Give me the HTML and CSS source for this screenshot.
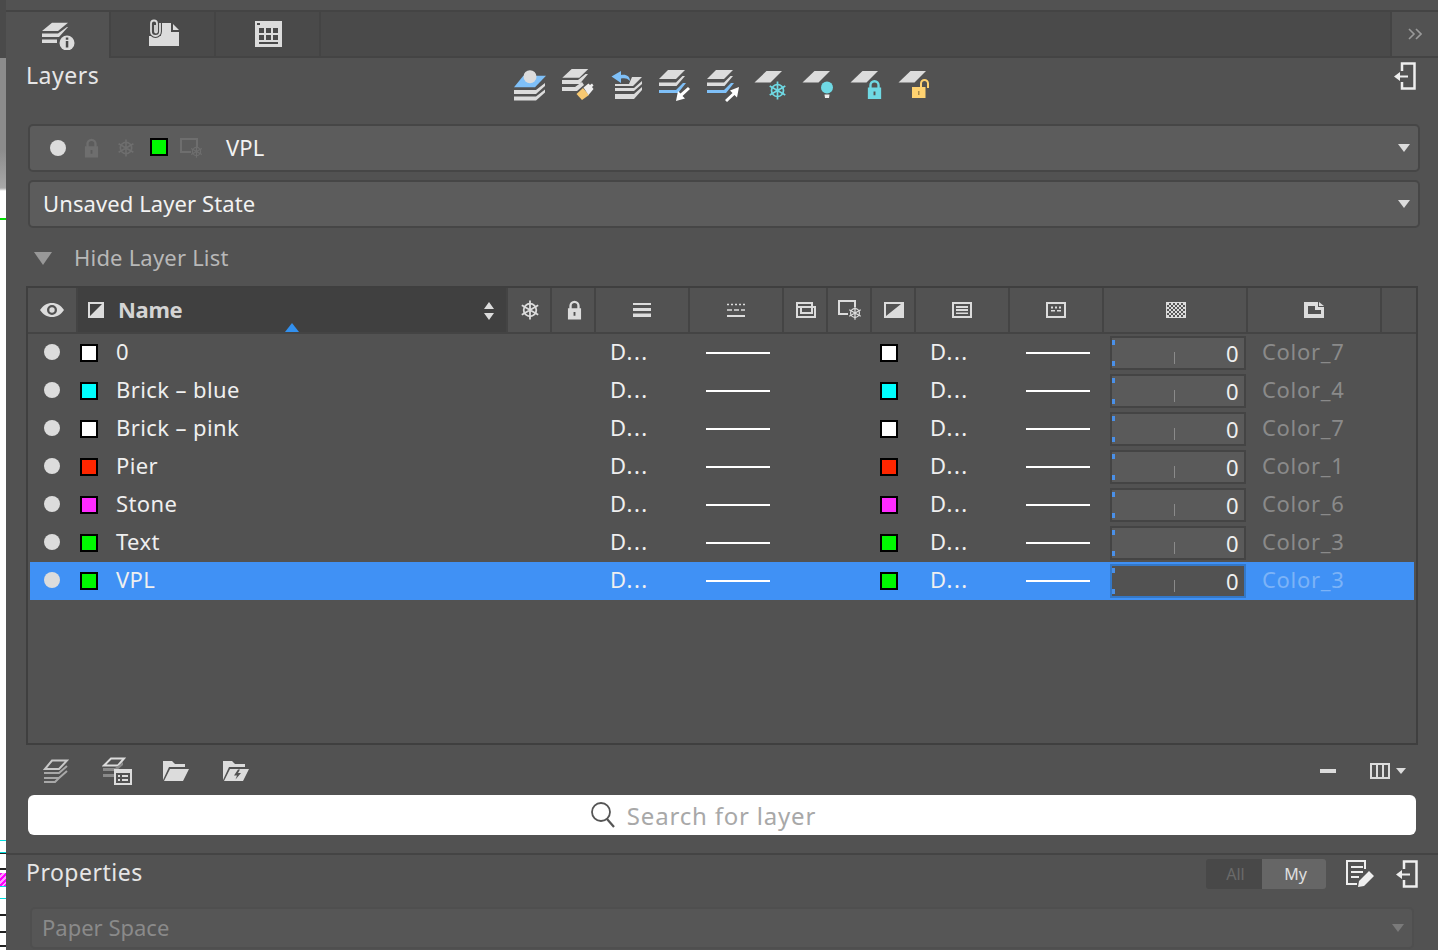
FILE: index.html
```html
<!DOCTYPE html>
<html lang="en">
<head>
    <title>Layers</title>
    <link rel="stylesheet" href="styles.css">
</head>
<body>
<svg class="sprites" width="0" height="0">
    <symbol id="dot" viewBox="0 0 16 16"><circle cx="8" cy="8" r="8" fill="#dcdcdc"/></symbol>
    <symbol id="flake" viewBox="0 0 20 20">
        <g fill="none" stroke="currentColor" stroke-width="1.800">
            <circle cx="10" cy="10" r="6.300"/>
            <path d="M10 .5v19M1.800 5.300l16.400 9.400M1.800 14.700l16.400-9.400"/>
        </g>
    </symbol>
    <symbol id="lock" viewBox="0 0 16 20">
        <path fill="currentColor" fill-rule="evenodd" d="M1 8h1.500V5.500a5.500 5.500 0 0 1 11 0V8H15v12H1zM5 8h6V5.500a3 3 0 0 0-6 0zM7 12v4h2v-4z"/>
    </symbol>
    <symbol id="exit" viewBox="0 0 22 28">
        <path fill="none" stroke="#eee" stroke-width="2.500" d="M8 9V1.500h12.500v25H8V20"/>
        <path fill="#eee" d="M0 14.500 6 10v3.500h8v2H6V19z"/>
    </symbol>
    <symbol id="slab" viewBox="0 0 36 36"><path fill="#dcdcdc" d="M14.500 4h15.500l-11.500 11.500H2.500z"/></symbol>
    <symbol id="stack" viewBox="0 0 36 36">
        <path fill="#dcdcdc" d="M12 3h17l-9 9H3z"/>
        <path fill="#dcdcdc" d="M3 15.500h17l6.500-6.500 2.500 0-8.500 10H3z"/>
    </symbol>
</svg>

<div class="canvas-strip"></div>

<div class="panel">
    <div class="tabs">
        <div class="tab active">
            <svg class="tab-one" width="33" height="28" viewBox="0 0 33 28">
                <path fill="#dcdcdc" d="M10 .7h16L16 9H0zM0 11.500h16l9-6.500h1L17 15H0zM0 17.500h15v3.500H0z"/>
                <circle cx="25" cy="21" r="7.500" fill="#dcdcdc"/>
                <path fill="#4a4a4a" d="M23.800 19h2.500v6.500h-2.500zM23.800 15.500h2.500v2.200h-2.500z"/>
            </svg>
        </div>
        <div class="tab">
            <svg class="tab-two" width="30" height="27" viewBox="0 0 30 27">
                <path fill="#dcdcdc" d="M12 4h10v9h8v14H0V17h12z"/>
                <path fill="#dcdcdc" d="M24 5l6 6h-6z"/>
                <path fill="none" stroke="#4a4a4a" stroke-width="4" d="M11 4v8.500a4.500 4.500 0 0 1-9 0V4.500a3 3 0 0 1 6 0v8a1 1 0 0 1-2 0V6"/>
                <path fill="none" stroke="#dcdcdc" stroke-width="1.800" d="M11 4v8.500a4.500 4.500 0 0 1-9 0V4.500a3 3 0 0 1 6 0v8a1 1 0 0 1-2 0V6"/>
            </svg>
        </div>
        <div class="tab">
            <svg width="27" height="26" viewBox="0 0 27 26">
                <path fill="#dcdcdc" fill-rule="evenodd" d="M0 0h27v26H0zM2 2v2h3V2zM4 7v5h5V7zM11 7v5h5V7zM18 7v5h5V7zM4 14v5h5v-5zM11 14v5h5v-5zM18 14v5h5v-5zM4 21v2h19v-2z"/>
            </svg>
        </div>
        <div class="tab-fill"></div>
        <div class="tab-more">
            <svg width="14" height="12" viewBox="0 0 14 12"><path fill="none" stroke="#9a9a9a" stroke-width="1.600" d="M1 1l5 5-5 5M8 1l5 5-5 5"/></svg>
        </div>
    </div>

    <div class="section-head">
        <h2 class="section-title">Layers</h2>
        <div class="tool-row">
            <svg class="tool" viewBox="0 0 36 36">
                <path fill="#7fc0f8" d="M11.300 8.700H34L23 20.300H2z"/>
                <circle cx="18" cy="9.700" r="6.500" fill="#dcdcdc"/>
                <path fill="#dcdcdc" d="M2 23h22l9-7v3l-9 8H2zM2 29.500h22l9-7v3l-9 8H2z"/>
            </svg>
            <svg class="tool" viewBox="0 0 36 36">
                <path fill="#dcdcdc" d="M11.700 2h16.600l-9 8.700h-17zM2 13h16l7.500-6 2.500 0-8.500 10H2zM2 20h13l7-5 2 3-7 6H2z"/>
                <path fill="#f8c971" d="M16.500 27l6.500-6 6 7-7 5z"/>
                <path fill="#eee" d="M23.500 20.500l5-4 1.500 1.500 2-1.500 1.500 2-1.500 1.500 1.500 2-5 6z"/>
            </svg>
            <svg class="tool" viewBox="0 0 36 36">
                <path fill="#dcdcdc" d="M24 10h10l-9 9H7v-2h14zM7 21h19l8-7v3l-8 7H7zM7 27h19l8-7v3l-8 9H7z"/>
                <path fill="#7fc0f8" d="M3.500 9.500 13 4v4c5-1 9 1 9 6-3-3-5-3-9-2.500V16z"/>
            </svg>
            <svg class="tool" viewBox="0 0 36 36">
                <use href="#stack"/>
                <path fill="#7fc0f8" d="M3 23h17l7-7h3l-8 10H3z"/>
                <path fill="#fff" d="M20 34l2-10 2.500 2.500L32 20l2 2-7.500 7 2.500 2.500z"/>
            </svg>
            <svg class="tool" viewBox="0 0 36 36">
                <use href="#stack"/>
                <path fill="#7fc0f8" d="M3 23h17l7-7h3l-8 10H3z"/>
                <path fill="#fff" d="M35 20l-2 10.500-2.500-2.500-7.500 7-2-2 7.500-7-2.500-2.500z"/>
            </svg>
            <svg class="tool" viewBox="0 0 36 36">
                <use href="#slab"/>
                <use href="#flake" x="16" y="14" width="19" height="19" class="ice"/>
            </svg>
            <svg class="tool" viewBox="0 0 36 36">
                <use href="#slab"/>
                <circle cx="27" cy="20.500" r="6" fill="#6fd9e4"/>
                <path fill="#eee" d="M24.500 27.500h5L29 31h-4z"/>
            </svg>
            <svg class="tool" viewBox="0 0 36 36">
                <use href="#slab"/>
                <use href="#lock" x="18.500" y="13" width="16" height="19" class="ice"/>
            </svg>
            <svg class="tool" viewBox="0 0 36 36">
                <use href="#slab"/>
                <path fill="#ffd270" d="M16 20h13.500v11H16z"/>
                <path fill="#a98a4a" d="M22 24h1.500v4H22z"/>
                <path fill="none" stroke="#ffd270" stroke-width="2" d="M25 20v-3.500a3.500 3.500 0 0 1 7 0V21"/>
            </svg>
        </div>
        <svg class="exit-icon"><use href="#exit"/></svg>
    </div>

    <div class="dropdown first">
        <svg class="state-dot"><use href="#dot"/></svg>
        <svg class="state-lock"><use href="#lock"/></svg>
        <svg class="state-flake"><use href="#flake"/></svg>
        <span class="swatch green"></span>
        <svg class="state-vp" viewBox="0 0 24 20">
            <path fill="none" stroke="#6e6e6e" stroke-width="2" d="M11 14H1V1h16v8"/>
            <use href="#flake" x="10" y="7" width="13" height="13"/>
        </svg>
        <span class="dropdown-label vpl">VPL</span>
        <span class="caret"></span>
    </div>
    <div class="dropdown">
        <span class="dropdown-label">Unsaved Layer State</span>
        <span class="caret"></span>
    </div>

    <div class="list-toggle">
        <span class="toggle-arrow"></span>
        <span class="toggle-label">Hide Layer List</span>
    </div>

    <div class="table">
        <div class="table-head">
            <div class="col"><svg width="24" height="14" viewBox="0 0 24 14"><path fill="#dcdcdc" fill-rule="evenodd" d="M0 7c3-4.500 7-7 12-7s9 2.500 12 7c-3 4.500-7 7-12 7S3 11.500 0 7zM12 2a5 5 0 1 0 0 10 5 5 0 0 0 0-10z"/><circle cx="12" cy="7" r="2.700" fill="#dcdcdc"/></svg></div>
            <div class="col col-name">
                <svg width="16" height="16" viewBox="0 0 16 16"><path fill="#dcdcdc" fill-rule="evenodd" d="M0 0h16v16H0zM2 2v12L14 2z"/></svg>
                <span class="name-label">Name</span>
                <span class="sort-mark"></span>
                <svg class="sort-arrows" width="12" height="18" viewBox="0 0 12 18"><path fill="#dcdcdc" d="M6 0l5 7H1zM6 18l-5-7h10z"/></svg>
            </div>
            <div class="col icon-col"><svg class="head-flake"><use href="#flake"/></svg></div>
            <div class="col icon-col"><svg class="head-lock"><use href="#lock"/></svg></div>
            <div class="col"><svg width="18" height="14" viewBox="0 0 18 14"><path fill="#dcdcdc" d="M0 0h18v2H0zM0 5h18v3H0zM0 10.500h18V14H0z"/></svg></div>
            <div class="col"><svg width="18" height="14" viewBox="0 0 18 14"><path fill="none" stroke="#dcdcdc" stroke-width="1.500" d="M0 1.500h18" stroke-dasharray="2 2"/><path fill="none" stroke="#dcdcdc" stroke-width="1.500" d="M0 7h18" stroke-dasharray="5 2"/><path fill="#dcdcdc" d="M0 12h18v2H0z"/></svg></div>
            <div class="col icon-col"><svg width="20" height="16" viewBox="0 0 20 16"><path fill="none" stroke="#dcdcdc" stroke-width="2" d="M1 5h18v10H1zM1 5V1h15v4M5 5v6h11V5"/></svg></div>
            <div class="col icon-col"><svg width="24" height="20" viewBox="0 0 24 20"><path fill="none" stroke="#dcdcdc" stroke-width="2" d="M10 14H1V1h16v6"/><use href="#flake" x="10" y="6" width="14" height="14"/></svg></div>
            <div class="col icon-col"><svg width="20" height="16" viewBox="0 0 20 16"><path fill="#dcdcdc" fill-rule="evenodd" d="M0 0h20v16H0zM2 2v12L17 2z"/></svg></div>
            <div class="col"><svg width="20" height="16" viewBox="0 0 20 16"><path fill="none" stroke="#dcdcdc" stroke-width="2" d="M1 1h18v14H1zM4 5h12M4 8h12"/><path fill="#dcdcdc" d="M4 10.500h12v1.500H4z"/></svg></div>
            <div class="col"><svg width="20" height="16" viewBox="0 0 20 16"><path fill="none" stroke="#dcdcdc" stroke-width="2" d="M1 1h18v14H1z"/><path fill="#dcdcdc" d="M5 4.500h2v2H5zM9 4.500h2v2H9zM13 4.500h2v2h-2zM5 8h4v1.500H5zM11 8h4v1.500h-4z"/></svg></div>
            <div class="col icon-col"><span class="checker"></span></div>
            <div class="col"><svg width="20" height="16" viewBox="0 0 20 16"><path fill="#dcdcdc" fill-rule="evenodd" d="M0 0h14v5h6v11H0zM4 4v8h13V8h-6V4z"/><path fill="#dcdcdc" d="M15 0l5 4h-5z"/></svg></div>
            <div class="col"></div>
        </div>

        <div class="table-body">
            <div class="row"><svg class="row-dot"><use href="#dot"/></svg><span class="swatch white"></span><span class="cell">0</span><span class="cell dots">D...</span><span class="line"></span><span class="swatch white"></span><span class="cell dots">D...</span><span class="line"></span><div class="slider"><i class="tick"></i><b class="mark top"></b><b class="mark bottom"></b>0</div><span class="cell color-name">Color_7</span></div>
            <div class="row"><svg class="row-dot"><use href="#dot"/></svg><span class="swatch cyan"></span><span class="cell">Brick – blue</span><span class="cell dots">D...</span><span class="line"></span><span class="swatch cyan"></span><span class="cell dots">D...</span><span class="line"></span><div class="slider"><i class="tick"></i><b class="mark top"></b><b class="mark bottom"></b>0</div><span class="cell color-name">Color_4</span></div>
            <div class="row"><svg class="row-dot"><use href="#dot"/></svg><span class="swatch white"></span><span class="cell">Brick – pink</span><span class="cell dots">D...</span><span class="line"></span><span class="swatch white"></span><span class="cell dots">D...</span><span class="line"></span><div class="slider"><i class="tick"></i><b class="mark top"></b><b class="mark bottom"></b>0</div><span class="cell color-name">Color_7</span></div>
            <div class="row"><svg class="row-dot"><use href="#dot"/></svg><span class="swatch red"></span><span class="cell">Pier</span><span class="cell dots">D...</span><span class="line"></span><span class="swatch red"></span><span class="cell dots">D...</span><span class="line"></span><div class="slider"><i class="tick"></i><b class="mark top"></b><b class="mark bottom"></b>0</div><span class="cell color-name">Color_1</span></div>
            <div class="row"><svg class="row-dot"><use href="#dot"/></svg><span class="swatch magenta"></span><span class="cell">Stone</span><span class="cell dots">D...</span><span class="line"></span><span class="swatch magenta"></span><span class="cell dots">D...</span><span class="line"></span><div class="slider"><i class="tick"></i><b class="mark top"></b><b class="mark bottom"></b>0</div><span class="cell color-name">Color_6</span></div>
            <div class="row"><svg class="row-dot"><use href="#dot"/></svg><span class="swatch green"></span><span class="cell">Text</span><span class="cell dots">D...</span><span class="line"></span><span class="swatch green"></span><span class="cell dots">D...</span><span class="line"></span><div class="slider"><i class="tick"></i><b class="mark top"></b><b class="mark bottom"></b>0</div><span class="cell color-name">Color_3</span></div>
            <div class="row selected"><svg class="row-dot"><use href="#dot"/></svg><span class="swatch green"></span><span class="cell">VPL</span><span class="cell dots">D...</span><span class="line"></span><span class="swatch green"></span><span class="cell dots">D...</span><span class="line"></span><div class="slider"><i class="tick"></i><b class="mark top"></b><b class="mark bottom"></b>0</div><span class="cell color-name">Color_3</span></div>
        </div>
    </div>

    <div class="list-tools">
        <svg class="lt-one" width="26" height="24" viewBox="0 0 26 24">
            <path fill="none" stroke="#c8c8c8" stroke-width="2" d="M9 1.500h15l-8 8.500H2z"/>
            <path fill="none" stroke="#a8a8a8" stroke-width="2" d="M1 14h15l8-7M1 19h15l8-7M1 23h11l5-5"/>
        </svg>
        <svg class="lt-two" width="30" height="28" viewBox="0 0 30 28">
            <path fill="none" stroke="#dcdcdc" stroke-width="2" d="M9 1.500h13l-6 7H2z"/>
            <path fill="#8a8a8a" d="M1 11h12l8-6v3l-7 6H1zM1 17h11v3H1z"/>
            <path fill="#525252" stroke="#dcdcdc" stroke-width="2" d="M13 13h16v14H13z"/>
            <path fill="#dcdcdc" d="M13 13h16v3H13zM16 18h2v2h-2zM20 18h6v2h-6zM16 22h2v2h-2zM20 22h6v2h-6z"/>
        </svg>
        <svg class="lt-three" width="26" height="20" viewBox="0 0 26 20">
            <path fill="#dcdcdc" d="M0 0h9l3 3h10v3H6L0 19zM7 8h19l-6 12H1z"/>
        </svg>
        <svg class="lt-four" width="26" height="20" viewBox="0 0 26 20">
            <path fill="#dcdcdc" d="M0 0h9l3 3h10v3H6L0 19zM7 8h19l-6 12H1z"/>
            <path fill="#525252" d="M15 8.500l-4 6h3l-1.500 4 5.500-6.500h-3l2-3.500z"/>
        </svg>
        <span class="spacer"></span>
        <span class="minus"></span>
        <svg class="columns" width="20" height="16" viewBox="0 0 20 16"><path fill="none" stroke="#dcdcdc" stroke-width="2" d="M1 1h18v14H1zM7 1v14M13 1v14"/></svg>
        <span class="columns-caret"></span>
    </div>

    <div class="search">
        <svg width="24" height="26" viewBox="0 0 24 26"><circle cx="10" cy="10" r="9" fill="none" stroke="#555" stroke-width="1.800"/><path stroke="#555" stroke-width="2.200" d="M16 17l7 8"/></svg>
        <span>Search for layer</span>
    </div>

    <div class="props-head">
        <h2 class="section-title">Properties</h2>
        <div class="seg">
            <span class="seg-off">All</span>
            <span class="seg-on">My</span>
        </div>
        <svg class="note-icon" width="28" height="28" viewBox="0 0 28 28">
            <path fill="none" stroke="#eee" stroke-width="2" d="M19 9V1H1v23h10"/>
            <path fill="#eee" d="M5 6h12v2H5zM5 11h12v2H5zM5 16h8v2H5zM12 27l1-6L23 11l5 5L18 26z"/>
        </svg>
        <svg class="exit-icon props-exit"><use href="#exit"/></svg>
    </div>

    <div class="dropdown paper">
        <span class="dropdown-label">Paper Space</span>
        <span class="caret"></span>
    </div>
</div>
</body>
</html>
```

FILE: styles.css
```css
html, body {
    margin: 0;
    height: 950px;
    overflow: hidden;
}

body {
    display: flex;
    background-color: #525252;
    font-family: "Noto Sans", "Open Sans", sans-serif;
    color: #eee;
}

.sprites {
    position: absolute;
}

.canvas-strip {
    width: 6px;
    flex: none;
    background:
        repeating-linear-gradient(135deg, #f0f 0 2px, #ff9cff 2px 4px) 0 873px / 6px 13px no-repeat,
        linear-gradient(#4a4a4a 0 58px, #8c8c8c 58px, #8c8c8c 150px, #a8a8a8 188px, #fff 191px, #fff 218px, #00e000 218px, #00e000 219.500px, #fff 219.500px, #fff 840px, #0dd 840px, #0dd 841px, #fff 841px, #fff 852px, #0dd 852px, #0dd 853px, #222 853px, #222 854px, #fff 854px, #fff 868px, #222 868px, #222 870px, #fff 870px, #fff 886px, #0dd 886px, #0dd 887px, #fff 887px, #fff 898px, #0dd 898px, #0dd 899px, #fff 899px, #fff 914px, #222 914px, #222 916px, #fff 916px, #fff 931px, #222 931px, #222 933px, #fff 933px, #fff 945px, #222 945px, #222 947px, #fff 947px);
}

.panel {
    flex: 1;
    min-width: 0;
    padding-top: 10px;
    background-color: #525252;
}

/* tabs */
.tabs {
    display: flex;
    height: 44px;
    border-top: 2px solid #444;
    border-bottom: 2px solid #444;
    background-color: #4a4a4a;
}

.tab {
    width: 101px;
    padding-left: 2px;
    display: flex;
    align-items: center;
    justify-content: center;
    border-right: 2px solid #444;
}

.tab.active {
    background-color: #525252;
    height: 46px;
    position: relative;
    z-index: 1;
}

.tab-one {
    margin-top: 2px;
}

.tab-two {
    margin-top: -3px;
}

.tab-fill {
    flex: 1;
}

.tab-more {
    width: 48px;
    display: flex;
    align-items: center;
    justify-content: center;
    background-color: #525252;
    border-left: 2px solid #444;
    box-sizing: border-box;
}

/* heading */
.section-head {
    display: flex;
    height: 66px;
    padding-left: 20px;
}

.section-title {
    margin: 0;
    font-size: 23px;
    font-weight: 400;
    letter-spacing: 0.5px;
    color: #e6e6e6;
    line-height: 30px;
}

.section-head .section-title {
    width: 486px;
    margin-top: 2px;
}

.tool-row {
    display: flex;
    gap: 12px;
    padding-top: 9px;
}

.tool {
    width: 36px;
    height: 36px;
}

.ice {
    color: #6fd9e4;
}

.exit-icon {
    width: 22px;
    height: 28px;
}

.section-head .exit-icon {
    margin-left: 462px;
    margin-top: 4px;
}

/* dropdowns */
.dropdown {
    display: flex;
    align-items: center;
    box-sizing: border-box;
    width: 1392px;
    height: 48px;
    margin: 0 0 8px 22px;
    padding-left: 13px;
    border: 2px solid #464646;
    border-radius: 5px;
    background-color: #5c5c5c;
    font-size: 22px;
}

.dropdown.first {
    padding-left: 20px;
}

.dropdown-label {
    margin-top: -2px;
    letter-spacing: 0.1px;
    color: #f2f2f2;
}

.caret {
    margin-left: auto;
    margin-right: 8px;
    border-left: 6px solid transparent;
    border-right: 6px solid transparent;
    border-top: 8px solid #dcdcdc;
}

.state-dot {
    width: 16px;
    height: 16px;
}

.state-lock {
    width: 15px;
    height: 20px;
    margin-left: 18px;
    color: #6e6e6e;
}

.state-flake {
    width: 18px;
    height: 18px;
    margin-left: 18px;
    color: #6e6e6e;
}

.dropdown .swatch {
    margin-left: 15px;
    margin-top: -2px;
}

.state-vp {
    width: 24px;
    height: 20px;
    margin-left: 12px;
    color: #6e6e6e;
}

.vpl {
    margin-left: 22px;
}

.swatch {
    flex: none;
    display: block;
    box-sizing: border-box;
    width: 18px;
    height: 18px;
    border: 2px solid #000;
}

.white { background-color: #fff; }
.cyan { background-color: #0ff; }
.red { background-color: #ff2600; }
.magenta { background-color: #ff2bff; }
.green { background-color: #00f900; }

/* hide list */
.list-toggle {
    display: flex;
    align-items: center;
    height: 44px;
    margin-bottom: 6px;
    padding-left: 28px;
    font-size: 22px;
    letter-spacing: 0.2px;
    color: #b8b8b8;
}

.toggle-label {
    margin-left: -1px;
    margin-top: -3px;
}

.toggle-arrow {
    width: 0;
    margin-right: 23px;
    border-left: 9px solid transparent;
    border-right: 9px solid transparent;
    border-top: 13px solid #989898;
}

/* table */
.table {
    box-sizing: border-box;
    width: 1392px;
    height: 459px;
    margin-left: 20px;
    border: 2px solid #3f3f3f;
}

.table-head {
    display: grid;
    grid-template-columns: 48px 428px 42px 42px 92px 92px 42px 42px 42px 92px 92px 142px 132px 34px;
    gap: 2px;
    height: 46px;
    border-bottom: 2px solid #444;
    background-color: #444;
    box-sizing: border-box;
}

.col {
    display: flex;
    align-items: center;
    justify-content: center;
    background-color: #525252;
    color: #dcdcdc;
}

.icon-col {
    padding-left: 2px;
}

.col-name {
    position: relative;
    justify-content: flex-start;
    padding-left: 10px;
    background-color: #404040;
}

.name-label {
    margin-left: 14px;
    margin-top: -2px;
    font-size: 22px;
    font-weight: 700;
    letter-spacing: -0.3px;
    color: #d4d4d4;
}

.sort-arrows {
    position: absolute;
    right: 11px;
    top: 14px;
}

.sort-mark {
    position: absolute;
    left: 207px;
    bottom: 0;
    border-left: 7px solid transparent;
    border-right: 7px solid transparent;
    border-bottom: 9px solid #3290ee;
}

.head-flake {
    width: 20px;
    height: 20px;
}

.head-lock {
    width: 15px;
    height: 20px;
}

.checker {
    display: block;
    width: 20px;
    height: 16px;
    border: 1px solid #dcdcdc;
    box-sizing: border-box;
    background-color: #dcdcdc;
    background-image: conic-gradient(#555 25%, #dcdcdc 0 50%, #555 0 75%, #dcdcdc 0);
    background-size: 4px 4px;
}

.table-body {
    padding: 0 2px;
}

.row {
    display: grid;
    grid-template-columns: 50px 36px 495px 95px 174px 51px 95px 84px 152px 1fr;
    align-items: center;
    height: 38px;
    font-size: 22px;
    letter-spacing: 0.4px;
    color: #efefef;
}

.cell {
    margin-top: -5px;
}

.dots {
    margin-left: -1px;
    letter-spacing: 1.400px;
}

.row-dot {
    width: 16px;
    height: 16px;
    margin-left: 14px;
    margin-top: -2px;
}

.line {
    display: block;
    width: 64px;
    height: 2px;
    background-color: #fff;
}

.slider {
    position: relative;
    box-sizing: border-box;
    width: 136px;
    height: 34px;
    padding-right: 5px;
    border: 2px solid #444;
    background-color: #5a5a5a;
    text-align: right;
    line-height: 30px;
}

.tick {
    position: absolute;
    left: 62px;
    bottom: 4px;
    width: 1px;
    height: 12px;
    background-color: #8a8a8a;
}

.mark {
    position: absolute;
    left: 0;
    width: 3px;
    height: 5px;
    background-color: #4a90e8;
}

.mark.top { top: 2px; }
.mark.bottom { bottom: 2px; }

.color-name {
    letter-spacing: 0.7px;
    color: #8a8a8a;
}

.row.selected {
    background-color: #4091f5;
}

.selected .slider {
    border-color: #3478c8;
    background-color: #525252;
}

.selected .color-name {
    color: #7cb3f7;
}

/* under the list */
.list-tools {
    display: flex;
    align-items: center;
    box-sizing: border-box;
    height: 50px;
    padding-left: 37px;
    padding-top: 2px;
}

.lt-two { margin-left: 33px; }
.lt-three { margin-left: 31px; }
.lt-four { margin-left: 34px; }

.spacer {
    flex: 1;
}

.minus {
    width: 16px;
    height: 4px;
    background-color: #dcdcdc;
}

.columns {
    margin-left: 34px;
}

.columns-caret {
    margin-left: 6px;
    margin-right: 32px;
    border-left: 5px solid transparent;
    border-right: 5px solid transparent;
    border-top: 6px solid #dcdcdc;
}

.search {
    display: flex;
    align-items: center;
    justify-content: center;
    gap: 12px;
    box-sizing: border-box;
    width: 1388px;
    height: 40px;
    margin-left: 22px;
    padding-right: 37px;
    border-radius: 6px;
    background-color: #fff;
    font-size: 24px;
    letter-spacing: 0.8px;
    color: #a8a8a8;
}

.props-head {
    display: flex;
    align-items: center;
    height: 38px;
    margin-top: 18px;
    margin-bottom: 16px;
    padding-left: 20px;
    border-top: 2px solid #444;
    box-sizing: border-box;
    padding-top: 2px;
}

.props-head .section-title {
    margin-top: -4px;
}

.seg {
    display: flex;
    height: 30px;
    margin-left: auto;
    border-radius: 3px;
    overflow: hidden;
    font-size: 16px;
    line-height: 30px;
    text-align: center;
    text-indent: 3px;
}

.seg-off {
    width: 56px;
    background-color: #484848;
    color: #6a6a6a;
}

.seg-on {
    width: 64px;
    background-color: #666;
    color: #e0e0e0;
}

.note-icon {
    margin-left: 20px;
}

.props-exit {
    margin-left: 22px;
    margin-right: 20px;
}

.dropdown.paper {
    width: 1384px;
    height: 42px;
    margin-left: 24px;
    padding-left: 10px;
    border-color: #4f4f4f;
    background-color: #565656;
}

.paper .dropdown-label {
    letter-spacing: 0;
    color: #8a8a8a;
}

.paper .caret {
    border-top-color: #7a7a7a;
}
```
